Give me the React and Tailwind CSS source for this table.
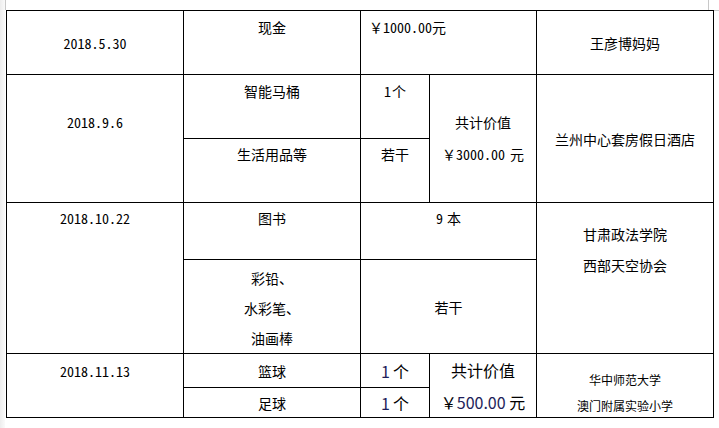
import React from "react";

const F = { fontFamily: '"Noto Sans CJK SC", "Noto Sans", sans-serif' };

function Cell({ className = "", children }) {
  return (
    <div className={"border-r border-b border-black text-black " + className}>
      {children}
    </div>
  );
}

function Yen() {
  return <span className="[font-feature-settings:normal]">￥</span>;
}

export default function App() {
  return (
    <div
      className="relative w-[719px] h-[428px] bg-white overflow-hidden text-[14px] leading-[20px] [font-feature-settings:'hwid']"
      style={F}
    >
      {/* page edge decorations */}
      <div className="absolute left-0 top-0 h-full w-[5px] bg-gradient-to-r from-[#ededed] to-[#fafafa]" />
      <div className="absolute left-[5px] top-0 h-[10px] w-px bg-[#c8c8c8]" />
      <div className="absolute left-[708px] top-0 h-[10px] w-px bg-[#c8c8c8]" />
      <div className="absolute left-[713px] top-[10px] h-px w-[6px] bg-[#c8c8c8]" />

      <div className="relative ml-[6px] mt-[10px] w-fit border-t border-l border-black grid grid-cols-[177px_177px_69px_107px_177px] grid-rows-[64px_64px_64px_57px_94px_34px_30px]">
        {/* Row 1 */}
        <Cell className="col-start-1 row-start-1 flex items-center justify-center">2018.5.30</Cell>
        <Cell className="col-start-2 row-start-1 pt-[6px] text-center">现金</Cell>
        <Cell className="col-start-3 col-span-2 row-start-1 pt-[6px] pl-[8px]">
          <Yen />1000.00元
        </Cell>
        <Cell className="col-start-5 row-start-1 flex items-center justify-center">王彦博妈妈</Cell>

        {/* Row 2-3 */}
        <Cell className="col-start-1 row-start-2 row-span-2 pt-[37px] text-center">2018.9.6</Cell>
        <Cell className="col-start-2 row-start-2 pt-[6px] text-center">智能马桶</Cell>
        <Cell className="col-start-3 row-start-2 pt-[6px] text-center">
          1<span className="ml-[1px]">个</span>
        </Cell>
        <Cell className="col-start-4 row-start-2 row-span-2 pt-[31px] text-center leading-[32px]">
          <div>共计价值</div>
          <div>
            <Yen />3000.00<span className="ml-[5px]">元</span>
          </div>
        </Cell>
        <Cell className="col-start-5 row-start-2 row-span-2 flex items-center justify-center">兰州中心套房假日酒店</Cell>
        <Cell className="col-start-2 row-start-3 pt-[5px] text-center">生活用品等</Cell>
        <Cell className="col-start-3 row-start-3 pt-[5px] text-center">若干</Cell>

        {/* Row 4-5 */}
        <Cell className="col-start-1 row-start-4 row-span-2 pt-[5px] text-center">2018.10.22</Cell>
        <Cell className="col-start-2 row-start-4 pt-[5px] text-center">图书</Cell>
        <Cell className="col-start-3 col-span-2 row-start-4 pt-[5px] text-center">
          9<span className="ml-[4px]">本</span>
        </Cell>
        <Cell className="col-start-5 row-start-4 row-span-2 pt-[16px] text-center leading-[31px]">
          <div>甘肃政法学院</div>
          <div>西部天空协会</div>
        </Cell>
        <Cell className="col-start-2 row-start-5 pt-[3px] text-center leading-[30px]">
          <div>彩铅、</div>
          <div>水彩笔、</div>
          <div>油画棒</div>
        </Cell>
        <Cell className="col-start-3 col-span-2 row-start-5 flex items-center justify-center">若干</Cell>

        {/* Row 6-7 */}
        <Cell className="col-start-1 row-start-6 row-span-2 pt-[7px] text-center">2018.11.13</Cell>
        <Cell className="col-start-2 row-start-6 flex items-center justify-center">篮球</Cell>
        <Cell className="col-start-3 row-start-6 flex items-center justify-center text-[16px] [font-feature-settings:normal]">
          <span className="text-[#1e1e5a]">1</span>
          <span className="ml-[3px]">个</span>
        </Cell>
        <Cell className="col-start-4 row-start-6 row-span-2 text-center text-[16px] leading-[32px] [font-feature-settings:normal]">
          <div>共计价值</div>
          <div>
            ￥<span className="text-[#1e1e5a]">500.00</span> 元
          </div>
        </Cell>
        <Cell className="col-start-5 row-start-6 row-span-2 pt-[13px] text-center text-[12px] leading-[26px]">
          <div>华中师范大学</div>
          <div>澳门附属实验小学</div>
        </Cell>
        <Cell className="col-start-2 row-start-7 flex items-center justify-center">足球</Cell>
        <Cell className="col-start-3 row-start-7 flex items-center justify-center text-[16px] [font-feature-settings:normal]">
          <span className="text-[#1e1e5a]">1</span>
          <span className="ml-[3px]">个</span>
        </Cell>
      </div>
    </div>
  );
}
